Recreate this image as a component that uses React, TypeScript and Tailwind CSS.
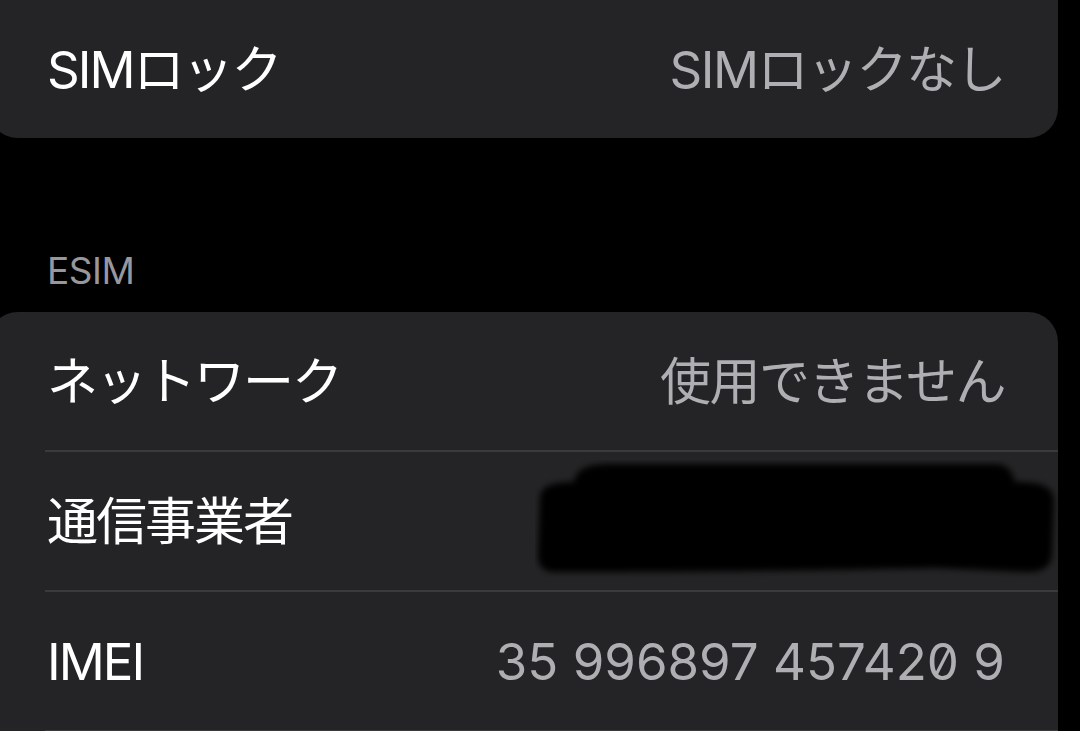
import React from "react";

const font = { fontFamily: 'Inter, "Noto Sans CJK JP", sans-serif' };

function Row({ label, value, divider, digits }: { label: string; value?: React.ReactNode; divider?: boolean; digits?: boolean }) {
  return (
    <div className="relative">
      <div className="h-[138px] flex items-center justify-between pl-[59px] pr-[53px]">
        <span className="text-[51px] leading-none text-white tracking-[-2px]">{label}</span>
        {typeof value === "string" ? (
          <span
            className={
              digits
                ? "text-[51px] leading-none text-[#aeaeb3] tracking-[0px] slashed-zero"
                : "text-[51px] leading-none text-[#aeaeb3] tracking-[-1.5px]"
            }
          >
            {value}
          </span>
        ) : (
          value
        )}
      </div>
      {divider && <div className="ml-[57px] h-[2px] bg-[#3a3a3c]" />}
    </div>
  );
}

function Redaction() {
  return (
    <svg className="absolute left-[547px] top-[8px]" width="530" height="120" viewBox="0 0 530 120">
      <defs>
        <filter id="blur" x="-10%" y="-20%" width="120%" height="140%">
          <feGaussianBlur stdDeviation="3" />
        </filter>
      </defs>
      <path
        d="M39 22 C41 8 55 4 75 4 L460 4 C474 4 478 14 480 22 C510 22 519 28 519 42 L517 96 C515 108 507 112 492 112 L400 108 C300 110 200 112 20 112 C8 112 3 106 3 96 L5 38 C5 26 18 22 39 22 Z"
        fill="#000"
        filter="url(#blur)"
      />
    </svg>
  );
}

export default function App() {
  return (
    <div className="w-[1080px] h-[731px] bg-black overflow-hidden" style={font}>
      <div className="-ml-3 w-[1070px] bg-[#242426] rounded-b-[30px]">
        <Row label="SIMロック" value="SIMロックなし" />
      </div>
      <div className="h-[174px] pl-[47px] pt-[114px]">
        <span className="block text-[37px] leading-none text-[#97979d] tracking-[-0.5px]">ESIM</span>
      </div>
      <div className="-ml-3 w-[1070px] bg-[#242426] rounded-t-[30px]">
        <Row label="ネットワーク" value="使用できません" divider />
        <div className="relative">
          <Row label="通信事業者" value={<span />} divider />
          <Redaction />
        </div>
        <Row label="IMEI" value="35 996897 457420 9" divider digits />
      </div>
    </div>
  );
}
